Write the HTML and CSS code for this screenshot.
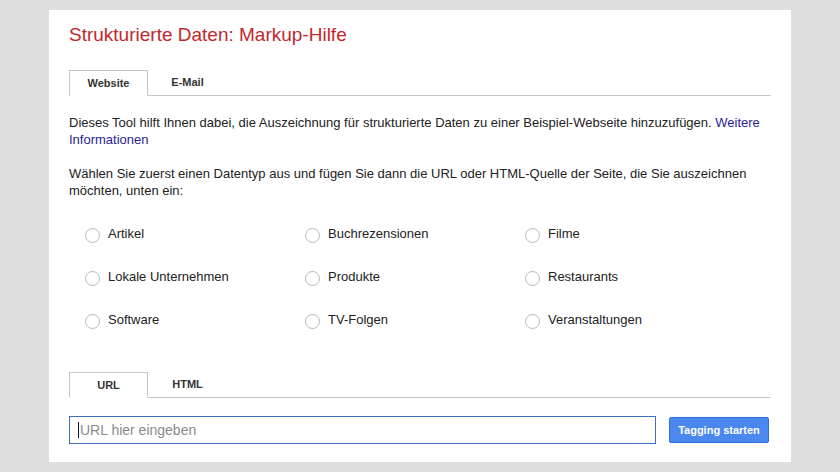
FILE: index.html
```html
<!DOCTYPE html>
<html lang="de">
<head>
  <meta charset="UTF-8" />
  <title>Strukturierte Daten: Markup-Hilfe</title>
  <link rel="stylesheet" href="styles.css">
</head>
<body>
  <div class="card">
    <h1>Strukturierte Daten: Markup-Hilfe</h1>

    <div class="tabs tabs-top">
      <span class="tab active">Website</span>
      <span class="tab">E-Mail</span>
    </div>

    <p class="intro">Dieses Tool hilft Ihnen dabei, die Auszeichnung für strukturierte Daten zu einer Beispiel-Webseite hinzuzufügen. <a href="#">Weitere Informationen</a></p>
    <p class="intro">Wählen Sie zuerst einen Datentyp aus und fügen Sie dann die URL oder HTML-Quelle der Seite, die Sie auszeichnen möchten, unten ein:</p>

    <div class="types">
      <label class="type"><input type="radio" name="type" /><span>Artikel</span></label>
      <label class="type"><input type="radio" name="type" /><span>Buchrezensionen</span></label>
      <label class="type"><input type="radio" name="type" /><span>Filme</span></label>
      <label class="type"><input type="radio" name="type" /><span>Lokale Unternehmen</span></label>
      <label class="type"><input type="radio" name="type" /><span>Produkte</span></label>
      <label class="type"><input type="radio" name="type" /><span>Restaurants</span></label>
      <label class="type"><input type="radio" name="type" /><span>Software</span></label>
      <label class="type"><input type="radio" name="type" /><span>TV-Folgen</span></label>
      <label class="type"><input type="radio" name="type" /><span>Veranstaltungen</span></label>
    </div>

    <div class="tabs tabs-source">
      <span class="tab active">URL</span>
      <span class="tab">HTML</span>
    </div>

    <div class="url-row">
      <div class="url-input"><span class="caret"></span>URL hier eingeben</div>
      <button class="btn-start">Tagging starten</button>
    </div>
  </div>
</body>
</html>
```

FILE: styles.css
```css
body {
  margin: 0;
  background-color: #dedede;
  font-family: "Liberation Sans", Arial, sans-serif;
  color: #222;
}

.card {
  width: 702px;
  height: 452px;
  margin: 10px 0 0 49px;
  padding: 0 20px;
  background: #fff;
  box-sizing: content-box;
  overflow: hidden;
}

h1 {
  margin: 0;
  padding-top: 12px;
  font-size: 19px;
  font-weight: normal;
  color: #c1282d;
  line-height: 26px;
}

.tabs {
  display: flex;
  border-bottom: 1px solid #c6c6c6;
  height: 25px;
}

.tabs-top {
  margin-top: 22px;
}

.tab {
  width: 79px;
  box-sizing: border-box;
  text-align: center;
  font-size: 11px;
  font-weight: bold;
  color: #333;
  line-height: 23px;
  padding-top: 1px;
}

.tab.active {
  border: 1px solid #c6c6c6;
  border-bottom: 1px solid #fff;
  height: 26px;
  background: #fff;
}

.intro {
  margin: 18px 0 0;
  font-size: 13px;
  line-height: 17px;
}

.intro + .intro {
  margin-top: 17px;
}

.intro a {
  color: #2a1d96;
  text-decoration: none;
}

.types {
  display: grid;
  grid-template-columns: 220px 220px 220px;
  grid-auto-rows: 43px;
  padding-left: 16px;
  margin-top: 26px;
}

.type {
  display: flex;
  align-items: flex-start;
  font-size: 13px;
  line-height: 17px;
}

.type input {
  appearance: none;
  width: 15px;
  height: 15px;
  margin: 3px 8px 0 0;
  border: 1px solid #b9b9b9;
  border-radius: 50%;
  background: #fff;
}

.tabs-source {
  margin-top: 18px;
}

.url-row {
  display: flex;
  gap: 13px;
  margin-top: 18px;
}

.url-input {
  width: 587px;
  height: 28px;
  box-sizing: border-box;
  border: 1px solid #3f6fb8;
  font-size: 14px;
  line-height: 26px;
  color: #8a8a8a;
  padding-left: 8px;
  display: flex;
  align-items: center;
}

.caret {
  width: 1px;
  height: 16px;
  background: #111;
  margin-right: 1px;
}

.btn-start {
  width: 100px;
  height: 26px;
  margin-top: 1px;
  border: 1px solid #2f6fd9;
  border-radius: 2px;
  background-color: #4a87ee;
  color: #fff;
  font-family: "Liberation Sans", Arial, sans-serif;
  font-size: 11px;
  font-weight: bold;
  padding: 0;
  cursor: pointer;
}
```
